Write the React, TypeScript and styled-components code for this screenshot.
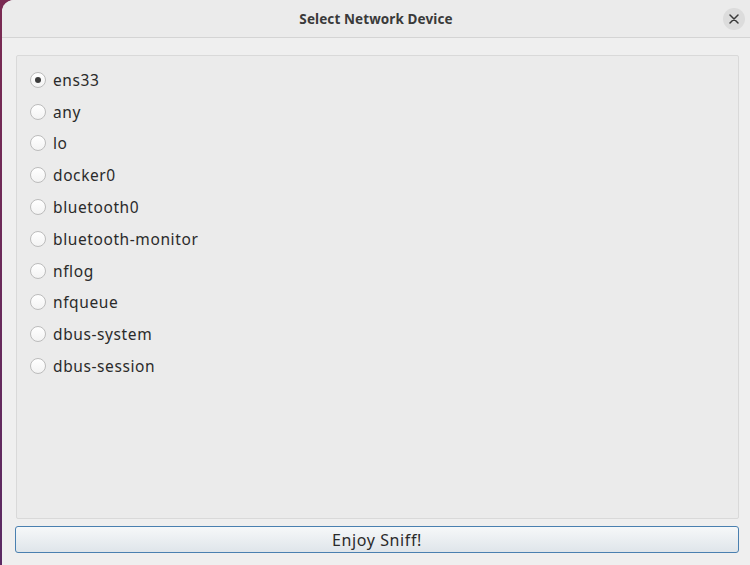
import { useState } from 'react';
import styled, { createGlobalStyle } from 'styled-components';

const GlobalStyle = createGlobalStyle`
  html, body {
    margin: 0;
    padding: 0;
    height: 100%;
    overflow: hidden;
    background: linear-gradient(180deg, #7a2a52 0%, #5b2a63 100%);
  }
  #root {
    height: 100%;
  }
`;

const devices = [
  'ens33',
  'any',
  'lo',
  'docker0',
  'bluetooth0',
  'bluetooth-monitor',
  'nflog',
  'nfqueue',
  'dbus-system',
  'dbus-session',
];

const Window = styled.div`
  display: flex;
  flex-direction: column;
  height: 565px;
  width: 760px;
  margin-left: 2px;
  background: #efefef;
  border-radius: 12px 12px 0 0;
  overflow: hidden;
  font-family: 'Noto Sans', 'DejaVu Sans', sans-serif;
`;

const TitleBar = styled.div`
  position: relative;
  display: flex;
  align-items: center;
  justify-content: center;
  height: 37px;
  width: 748px;
  background: #ebebeb;
  border-bottom: 1px solid #d4d4d4;
  flex-shrink: 0;
`;

const Title = styled.span`
  font-size: 13.5px;
  font-weight: 700;
  letter-spacing: 0.1px;
  color: #3a3a3a;
`;

const CloseButton = styled.button`
  position: absolute;
  right: 5px;
  top: 8px;
  width: 22px;
  height: 22px;
  border: none;
  border-radius: 50%;
  background: #dcdcdc;
  display: flex;
  align-items: center;
  justify-content: center;
  padding: 0;
`;

const Body = styled.div`
  display: flex;
  flex-direction: column;
  flex: 1;
  width: 748px;
  padding: 17px 11px 12px 13px;
  box-sizing: border-box;
  gap: 7px;
`;

const Frame = styled.div`
  flex: 1;
  display: flex;
  flex-direction: column;
  margin-left: 1px;
  padding: 8px 13px;
  background: #ebebeb;
  border: 1px solid #d9d9d9;
  border-radius: 2px;
`;

const Option = styled.label`
  display: flex;
  align-items: center;
  gap: 7px;
  height: 31.8px;
  font-size: 15.5px;
  letter-spacing: 0.6px;
  color: #2a2a2a;
  cursor: pointer;
`;

const Radio = styled.span<{ $checked: boolean }>`
  width: 14px;
  height: 14px;
  border-radius: 50%;
  border: 1px solid #bcbcbc;
  background: linear-gradient(180deg, #ffffff 0%, #f3f3f3 100%);
  display: flex;
  align-items: center;
  justify-content: center;
  flex-shrink: 0;

  &::after {
    content: '';
    display: ${(p) => (p.$checked ? 'block' : 'none')};
    width: 6px;
    height: 6px;
    border-radius: 50%;
    background: #3c3c3c;
  }
`;

const ActionButton = styled.button`
  height: 27px;
  flex-shrink: 0;
  border: 1px solid #4a80b0;
  border-radius: 3px;
  background: linear-gradient(180deg, #f6f8f9 0%, #dfe5ea 100%);
  font-family: 'Noto Sans', 'DejaVu Sans', sans-serif;
  font-size: 16px;
  letter-spacing: 0.6px;
  color: #2a2a2a;
  padding: 0;
`;

export default function App() {
  const [selected, setSelected] = useState('ens33');

  return (
    <>
      <GlobalStyle />
      <Window>
        <TitleBar>
          <Title>Select Network Device</Title>
          <CloseButton aria-label="Close">
            <svg width="10" height="10" viewBox="0 0 10 10">
              <path d="M1 1 L9 9 M9 1 L1 9" stroke="#3a3a3a" strokeWidth="1.5" strokeLinecap="round" />
            </svg>
          </CloseButton>
        </TitleBar>
        <Body>
          <Frame>
            {devices.map((d) => (
              <Option key={d} onClick={() => setSelected(d)}>
                <Radio $checked={selected === d} />
                {d}
              </Option>
            ))}
          </Frame>
          <ActionButton>Enjoy Sniff!</ActionButton>
        </Body>
      </Window>
    </>
  );
}
